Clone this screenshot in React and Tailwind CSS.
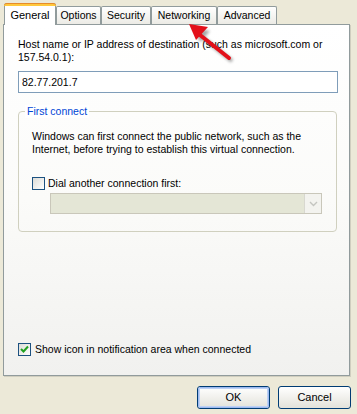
import React from 'react';

const font = { fontFamily: '"Liberation Sans", Tahoma, sans-serif' };

function Tab({ label, active, width }) {
  if (active) {
    return (
      <div className={`relative z-10 -mb-px flex h-[22px] items-center justify-center self-end rounded-t-[3px] border border-b-0 border-[#919b9c] bg-white pt-[2px] text-[11px] text-black ${width}`}>
        <div className="absolute inset-x-[-1px] top-[-1px] h-[3px] rounded-t-[3px] border-t border-[#e68b2c] bg-[#ffc83c]" />
        {label}
      </div>
    );
  }
  return (
    <div className={`flex h-[18px] items-center justify-center self-end rounded-t-[2px] border border-b-0 border-[#919b9c] bg-gradient-to-b from-white to-[#ecebe5] text-black ${width}`}>
      {label}
    </div>
  );
}

function Checkbox({ checked }) {
  return (
    <div className="flex h-[13px] w-[13px] shrink-0 items-center justify-center border border-[#1c5180] bg-gradient-to-br from-[#dcdcd7] to-white">
      {checked && (
        <svg width="9" height="9" viewBox="0 0 9 9">
          <path d="M1 4 L3.5 6.5 L8 1.5" stroke="#21a121" strokeWidth="2" fill="none" />
        </svg>
      )}
    </div>
  );
}

function Button({ children, isDefault }) {
  return (
    <div className="flex h-[23px] w-[73px] items-center justify-center rounded-[3px] border border-[#003c74] bg-gradient-to-b from-white to-[#e3e2da] text-[11px] text-black">
      <div className={`flex h-full w-full items-center justify-center rounded-[2px] ${isDefault ? 'border border-[#9dbaf0] shadow-[inset_0_0_0_1px_#bdd1f4]' : ''}`}>
        {children}
      </div>
    </div>
  );
}

export default function App() {
  return (
    <div className="relative h-[414px] w-[357px] overflow-hidden bg-[#ece9d8] text-[10.5px] leading-[13px] text-black" style={font}>
      <div className="flex h-[24px] items-end pl-[4px]">
        <Tab label="General" active width="w-[52px]" />
        <Tab label="Options" width="w-[45px]" />
        <Tab label="Security" width="w-[50px]" />
        <Tab label="Networking" width="w-[66px]" />
        <Tab label="Advanced" width="w-[60px]" />
      </div>

      <div className="ml-[3px] flex h-[352px] w-[347px] flex-col border border-[#919b9c] bg-gradient-to-b from-white via-[#fbfbf9] to-[#f1f1ef] pl-[14px] pr-[12px] shadow-[1px_1px_0_#d0cebf]">
        <p className="mt-[13px] w-[320px]">Host name or IP address of destination (such as microsoft.com or 157.54.0.1):</p>

        <div className="mt-[7px] flex h-[22px] w-[320px] items-center border border-[#7f9db9] bg-white px-[3px]">
          82.77.201.7
        </div>

        <div className="relative mt-[18px] h-[121px] w-[319px] rounded-[4px] border border-[#d0d0bf] pl-[13px] pr-[10px]">
          <span className="absolute left-[6px] top-[-7px] bg-white px-[2px] text-[#0046d5]">First connect</span>
          <p className="mt-[18px]">Windows can first connect the public network, such as the Internet, before trying to establish this virtual connection.</p>
          <div className="mt-[21px] flex items-center gap-[3px]">
            <Checkbox />
            <span>Dial another connection first:</span>
          </div>
          <div className="ml-[18px] mt-[3px] flex h-[21px] w-[272px] border border-[#c9c7ba] bg-[#e4e6d6]">
            <div className="flex-1" />
            <div className="flex w-[17px] items-center justify-center border-l border-[#d8d8d0] bg-[#f3f3ef]">
              <svg width="9" height="6" viewBox="0 0 9 6">
                <path d="M1 1 L4.5 4.5 L8 1" stroke="#c4c5c0" strokeWidth="1.4" fill="none" />
              </svg>
            </div>
          </div>
        </div>

        <div className="mt-auto mb-[19px] flex items-center gap-[4px]">
          <Checkbox checked />
          <span>Show icon in notification area when connected</span>
        </div>
      </div>

      <div className="mt-[10px] flex justify-end gap-[8px] pr-[6px]">
        <Button isDefault>OK</Button>
        <Button>Cancel</Button>
      </div>

      <svg className="pointer-events-none absolute left-0 top-0" width="357" height="414">
        <defs>
          <filter id="sh" x="-50%" y="-50%" width="200%" height="200%">
            <feGaussianBlur stdDeviation="1.5" />
          </filter>
        </defs>
        <g transform="translate(3,3)" opacity="0.35" filter="url(#sh)">
          <line x1="229" y1="58" x2="200" y2="35" stroke="#000" strokeWidth="4" />
          <polygon points="190,25 207,28 197,39" fill="#000" />
        </g>
        <line x1="229" y1="58" x2="200" y2="35" stroke="#e3101a" strokeWidth="4" strokeLinecap="round" />
        <polygon points="189,24 208,27 196,40" fill="#e3101a" />
      </svg>
    </div>
  );
}
